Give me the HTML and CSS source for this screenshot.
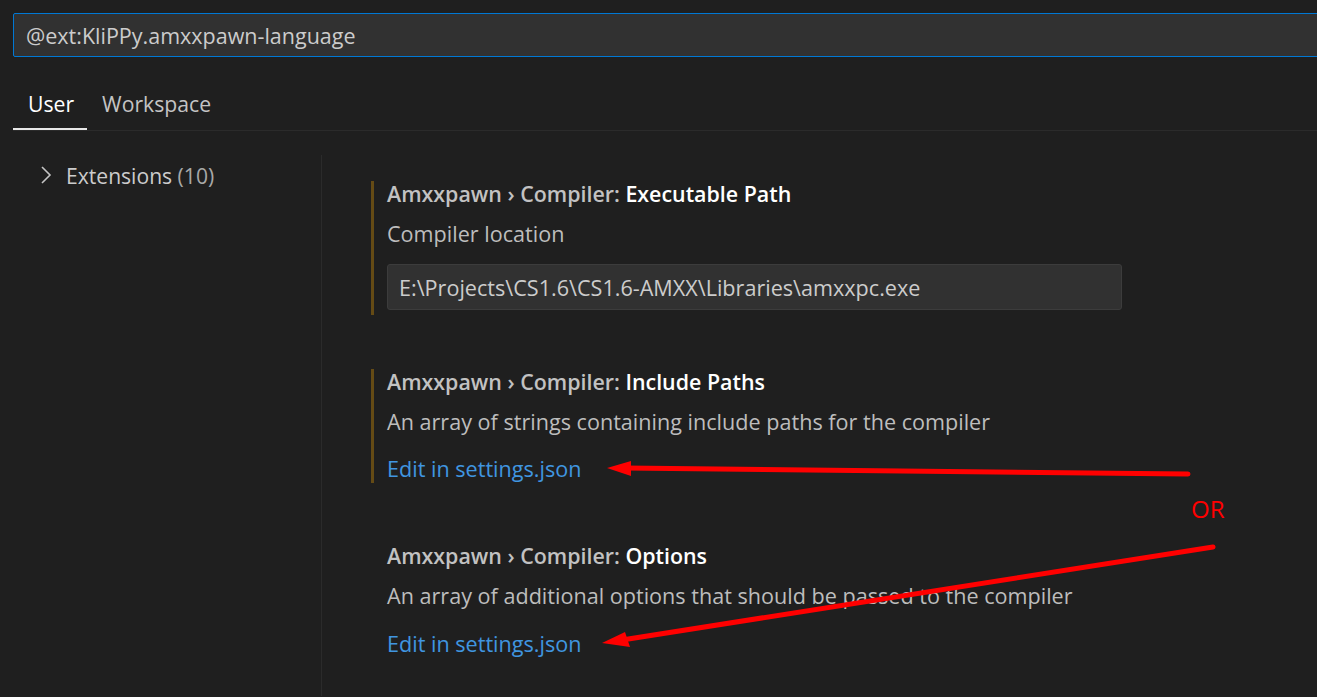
FILE: index.html
```html
<!DOCTYPE html>
<html>
<head>
<meta charset="utf-8">
<link rel="stylesheet" href="styles.css">
</head>
<body>
<div class="page">
  <div class="search">@ext:KliPPy.amxxpawn-language</div>
  <div class="tabs">
    <div class="tab active">User</div>
    <div class="tab">Workspace</div>
  </div>
  <div class="main">
    <div class="sidebar">
      <div class="tree-row">
        <svg class="chev" width="12" height="20" viewBox="0 0 12 20"><polyline points="2,2 10,10 2,18" fill="none" stroke="#c5c5c5" stroke-width="1.6"/></svg>
        <span class="tree-label">Extensions <span class="count">(10)</span></span>
      </div>
    </div>
    <div class="content">
      <div class="setting modified s1">
        <div class="title"><span class="cat">Amxxpawn › Compiler: </span><span class="name">Executable Path</span></div>
        <div class="desc">Compiler location</div>
        <div class="input">E:\Projects\CS1.6\CS1.6-AMXX\Libraries\amxxpc.exe</div>
      </div>
      <div class="setting modified s2">
        <div class="title"><span class="cat">Amxxpawn › Compiler: </span><span class="name">Include Paths</span></div>
        <div class="desc">An array of strings containing include paths for the compiler</div>
        <div class="link">Edit in settings.json</div>
      </div>
      <div class="setting s3">
        <div class="title"><span class="cat">Amxxpawn › Compiler: </span><span class="name">Options</span></div>
        <div class="desc">An array of additional options that should be passed to the compiler</div>
        <div class="link">Edit in settings.json</div>
      </div>
    </div>
  </div>
  <div class="annot">OR</div>
  <svg class="arrows" width="1317" height="697" viewBox="0 0 1317 697">
    <line x1="1188" y1="474" x2="625" y2="468" stroke="#ff0000" stroke-width="5" stroke-linecap="round"/>
    <polygon points="607,468 631,461 631,476" fill="#ff0000"/>
    <line x1="1213" y1="547" x2="622" y2="640" stroke="#ff0000" stroke-width="5" stroke-linecap="round"/>
    <polygon points="602,643 625,632 630,647" fill="#ff0000"/>
  </svg>
</div>
</body>
</html>
```

FILE: styles.css
```css
* { box-sizing: border-box; }
html, body {
  margin: 0;
  padding: 0;
  background: #1f1f1f;
  overflow: hidden;
}
.page {
  position: relative;
  width: 1317px;
  height: 697px;
  padding-top: 13px;
  font-family: "Open Sans", "Noto Sans", sans-serif;
  color: #cccccc;
}
.search {
  margin-left: 13px;
  width: 1320px;
  height: 44px;
  border: 1px solid #0078d4;
  border-radius: 2px;
  background: #313131;
  padding-left: 12px;
  padding-top: 2px;
  font-size: 21.5px;
  line-height: 40px;
  color: #cccccc;
}
.tabs {
  display: flex;
  margin-top: 29px;
  margin-left: 13px;
  height: 45px;
  border-bottom: 1px solid #2b2b2b;
}
.tab {
  padding: 0 13px 0 15px;
  font-size: 21.2px;
  line-height: 36px;
  color: #c4c4c4;
  height: 44px;
}
.tab + .tab { padding-left: 15px; }
.tab.active {
  color: #ffffff;
  border-bottom: 2px solid #e7e7e7;
}
.main {
  display: flex;
  margin-top: 24px;
  height: 541px;
}
.sidebar {
  width: 322px;
  border-right: 1px solid #2b2b2b;
}
.tree-row {
  display: flex;
  align-items: center;
  height: 40px;
  padding-left: 40px;
  gap: 14px;
  font-size: 21.1px;
}
.chev { display: block; }
.count { color: #a8a8a8; }
.content {
  flex: 1;
  padding-top: 26px;
  padding-left: 49px;
}
.setting {
  border-left: 3px solid transparent;
  padding-left: 13px;
}
.setting.modified { border-left-color: rgba(187, 128, 9, 0.45); }
.s1 { padding-bottom: 5px; }
.s2 { margin-top: 54px; padding-bottom: 2px; }
.s3 { margin-top: 60px; }
.title {
  font-size: 21.4px;
  line-height: 25px;
  font-weight: 600;
}
.cat { color: #c2c2c2; }
.name { color: #ffffff; }
.desc {
  margin-top: 15px;
  font-size: 21.6px;
  line-height: 25px;
  color: #bdbdbd;
}
.input {
  margin-top: 18px;
  width: 735px;
  height: 46px;
  background: #313131;
  border: 1px solid #3c3c3c;
  border-radius: 3px;
  padding-left: 11px;
  padding-top: 1px;
  font-size: 21.6px;
  line-height: 44px;
  color: #cccccc;
}
.link {
  margin-top: 22px;
  font-size: 21.6px;
  line-height: 25px;
  color: #4096e0;
}
.s3 .link { margin-top: 23px; }
.annot {
  position: absolute;
  left: 1191px;
  top: 494px;
  font-size: 24px;
  line-height: 30px;
  color: #ff0000;
}
.arrows {
  position: absolute;
  left: 0;
  top: 0;
}
```
